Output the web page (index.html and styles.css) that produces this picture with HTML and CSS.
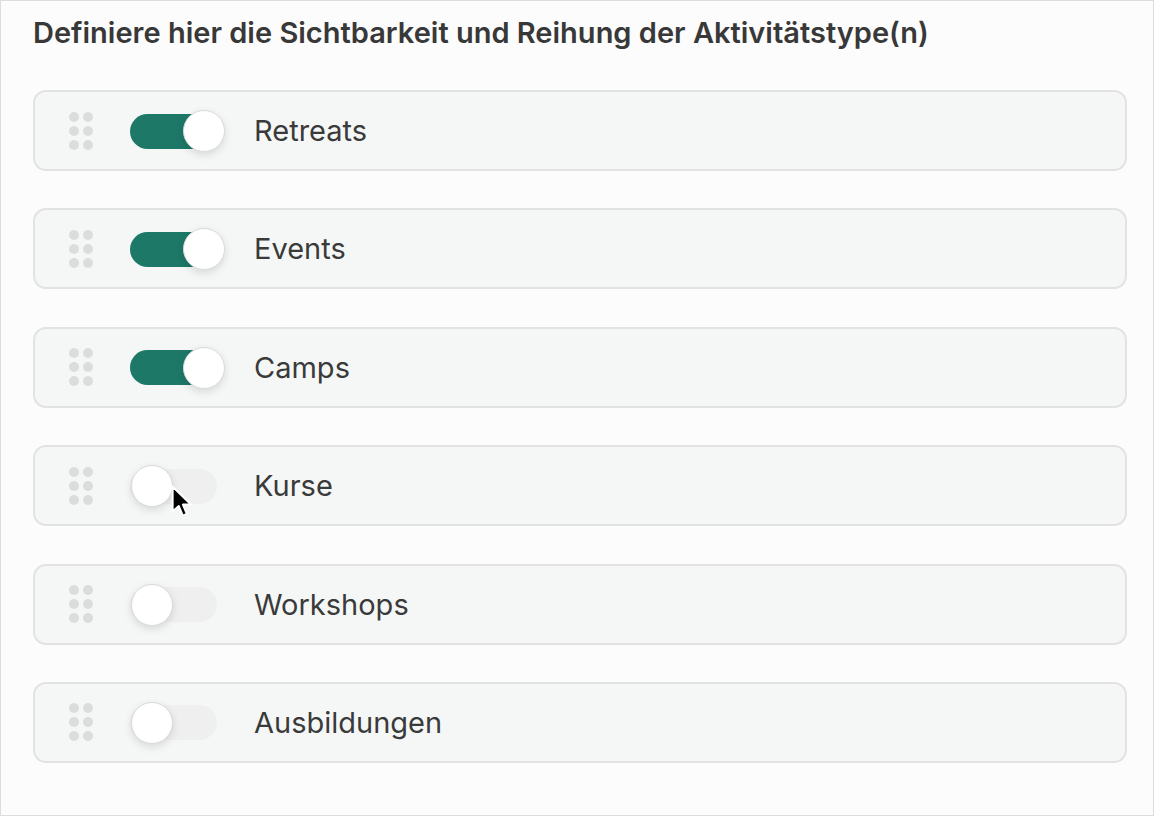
FILE: index.html
```html
<!DOCTYPE html>
<html lang="de">
<head>
    <meta charset="UTF-8">
    <meta name="viewport" content="width=device-width, initial-scale=1.0">
    <title>Aktivitätstypen</title>
    <link rel="stylesheet" href="styles.css">
</head>
<body>
    <div class="wrap">
        <h1 class="title">Definiere hier die Sichtbarkeit und Reihung der Aktivitätstype(n)</h1>
        <ul class="list">
            <li class="item">
                <span class="handle"><i></i><i></i><i></i><i></i><i></i><i></i></span>
                <span class="toggle on"><span class="knob"></span></span>
                <span class="label">Retreats</span>
            </li>
            <li class="item">
                <span class="handle"><i></i><i></i><i></i><i></i><i></i><i></i></span>
                <span class="toggle on"><span class="knob"></span></span>
                <span class="label">Events</span>
            </li>
            <li class="item">
                <span class="handle"><i></i><i></i><i></i><i></i><i></i><i></i></span>
                <span class="toggle on"><span class="knob"></span></span>
                <span class="label">Camps</span>
            </li>
            <li class="item">
                <span class="handle"><i></i><i></i><i></i><i></i><i></i><i></i></span>
                <span class="toggle"><span class="knob"></span>
                    <svg class="cursor" width="22" height="34" viewBox="0 0 13 20">
                        <path d="M1 1 L1 15.5 L4.6 12.3 L7 18 L9.3 17 L7 11.5 L11.8 11.5 Z" fill="#000" stroke="#fff" stroke-width="1.1" stroke-linejoin="round"/>
                    </svg>
                </span>
                <span class="label">Kurse</span>
            </li>
            <li class="item">
                <span class="handle"><i></i><i></i><i></i><i></i><i></i><i></i></span>
                <span class="toggle"><span class="knob"></span></span>
                <span class="label">Workshops</span>
            </li>
            <li class="item">
                <span class="handle"><i></i><i></i><i></i><i></i><i></i><i></i></span>
                <span class="toggle"><span class="knob"></span></span>
                <span class="label">Ausbildungen</span>
            </li>
        </ul>
    </div>
</body>
</html>
```

FILE: styles.css
```css
*{
    margin: 0;
    padding: 0;
    box-sizing: border-box;
}
body{
    background: #fcfcfc;
    font-family: Inter, "Noto Sans", sans-serif;
    color: #3a3a3a;
}
.wrap{
    width: 1154px;
    height: 816px;
    border: 1px solid #dcdcdc;
    padding: 13px 26px 0 32px;
}
.title{
    font-size: 29px;
    font-weight: 600;
    line-height: 38px;
    color: #383838;
    letter-spacing: 0;
}
.list{
    list-style: none;
    margin-top: 38px;
    display: flex;
    flex-direction: column;
    gap: 37.4px;
}
.item{
    height: 81px;
    border: 2px solid #e2e2e2;
    border-radius: 13px;
    background: #f5f7f6;
    display: flex;
    align-items: center;
    padding-left: 34px;
}
.handle{
    width: 24px;
    display: grid;
    grid-template-columns: 10px 10px;
    gap: 4px;
}
.handle i{
    width: 10px;
    height: 10px;
    border-radius: 50%;
    background: #dcdcdc;
}
.toggle{
    position: relative;
    width: 87px;
    height: 35px;
    border-radius: 18px;
    background: #efefef;
    margin-left: 37px;
    margin-top: 1px;
}
.toggle.on{
    background: #1d7868;
}
.knob{
    position: absolute;
    left: 1px;
    top: -3.5px;
    width: 42px;
    height: 42px;
    border-radius: 50%;
    background: #fff;
    border: 1px solid #dadada;
    box-shadow: 0 3px 8px rgba(0,0,0,0.12);
}
.toggle.on .knob{
    left: 53px;
}
.cursor{
    position: absolute;
    left: 41px;
    top: 16px;
}
.label{
    margin-left: 37px;
    font-size: 29px;
    color: #3a3a3a;
}
```
